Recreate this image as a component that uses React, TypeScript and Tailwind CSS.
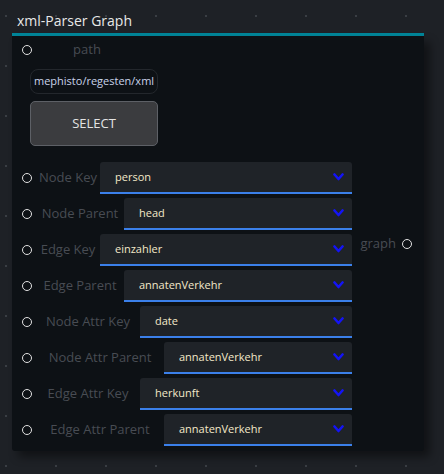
const rows = [
  { label: "Node Key", value: "person", w: "w-[64px]" },
  { label: "Node Parent", value: "head", w: "w-[88px]" },
  { label: "Edge Key", value: "einzahler", w: "w-[64px]" },
  { label: "Edge Parent", value: "annatenVerkehr", w: "w-[88px]" },
  { label: "Node Attr Key", value: "date", w: "w-[104px]" },
  { label: "Node Attr Parent", value: "annatenVerkehr", w: "w-[128px]" },
  { label: "Edge Attr Key", value: "herkunft", w: "w-[104px]" },
  { label: "Edge Attr Parent", value: "annatenVerkehr", w: "w-[128px]" },
];

function Port() {
  return <span className="block h-[10px] w-[10px] shrink-0 rounded-full border-[1.5px] border-[#e2e2e2]" />;
}

function Chevron() {
  return (
    <svg width="11" height="8" viewBox="0 0 11 8" className="shrink-0">
      <path d="M1.5 1.5 L5.5 6 L9.5 1.5" fill="none" stroke="#1414f5" strokeWidth="2.6" strokeLinecap="round" strokeLinejoin="round" />
    </svg>
  );
}

function SelectRow({ label, value, w }: { label: string; value: string; w: string }) {
  return (
    <div className="flex h-[32px] items-center">
      <div className="flex w-[23px] justify-end pr-[4px]">
        <Port />
      </div>
      <div className={`${w} shrink-0 text-center text-[13px] text-[#484c53]`}>{label}</div>
      <div className="flex h-[32px] flex-1 items-center justify-between rounded-t-[3px] border-b-2 border-[#3b80ea] bg-[#1f2328] pl-[15px] pr-[8px]">
        <span className="text-[11px] text-[#f3e8c8]">{value}</span>
        <Chevron />
      </div>
    </div>
  );
}

export default function App() {
  return (
    <div
      className="relative h-[474px] w-[444px] overflow-hidden bg-[#1e2126]"
      style={{
        fontFamily: '"Open Sans", "Noto Sans", sans-serif',
        backgroundImage: "radial-gradient(circle, #3a3e44 1px, transparent 1.2px)",
        backgroundSize: "50px 50px",
        backgroundPosition: "-19px -9px",
      }}
    >
      <div className="ml-[12px] mt-[8px] w-[412px]">
        <div className="flex h-[25px] items-center pl-[5px] text-[14px] text-[#e8e8e8]">xml-Parser Graph</div>
        <div className="h-[3px] bg-[#00869a]" />
        <div className="flex h-[415px] rounded-b-[3px] bg-[#0d1115] pl-[1px] pr-[1px] shadow-[6px_6px_10px_rgba(0,0,0,0.45)]">
          <div className="flex w-[339px] flex-col">
            <div className="flex h-[28px] items-center">
              <div className="flex w-[19px] justify-end">
                <Port />
              </div>
              <div className="w-[110px] text-center text-[13px] text-[#484c53]">path</div>
            </div>
            <div className="ml-[17px] mt-[5px] flex h-[25px] w-[128px] items-center rounded-[8px] border border-[#23272c] pl-[3px] text-[11px] font-medium text-[#c9d3ea]">
              mephisto/regesten/xml
            </div>
            <div className="ml-[17px] mt-[7px] flex h-[45px] w-[128px] items-center justify-center rounded-[5px] border border-[#5d6066] bg-[#3b3c3f] text-[13px] text-[#e4e4e4]">
              SELECT
            </div>
            <div className="mt-[16px] flex flex-col gap-[4px]">
              {rows.map((r) => (
                <SelectRow key={r.label} {...r} />
              ))}
            </div>
          </div>
          <div className="flex flex-1 items-center justify-end gap-[6px] pr-[11px]">
            <span className="text-[13px] text-[#484c53]">graph</span>
            <Port />
          </div>
        </div>
      </div>
    </div>
  );
}
